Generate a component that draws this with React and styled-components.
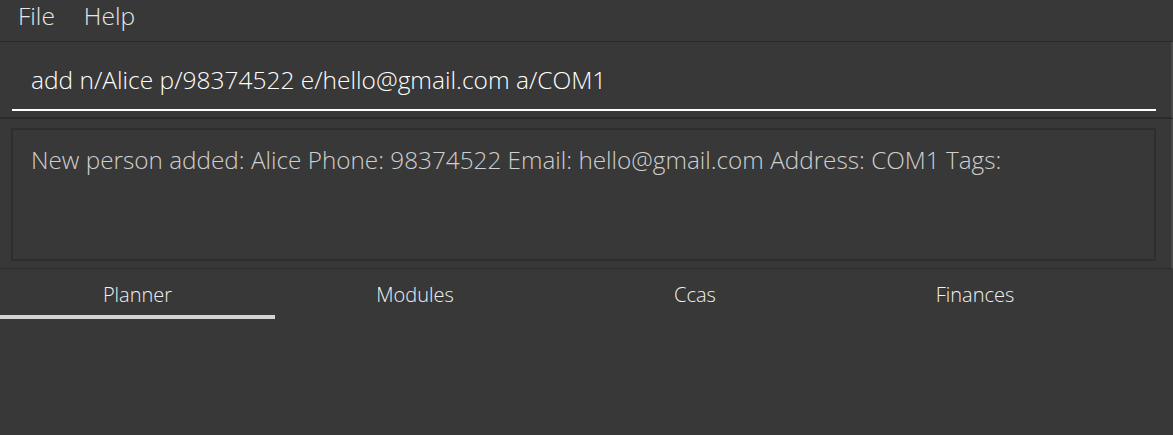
import React from "react";
import styled, { createGlobalStyle } from "styled-components";

const GlobalStyle = createGlobalStyle`
  html, body {
    margin: 0;
    padding: 0;
    background: #383838;
  }
  body {
    font-family: "Open Sans", "Noto Sans", sans-serif;
    font-weight: 300;
  }
`;

const tabs = ["Planner", "Modules", "Ccas", "Finances"];

function App() {
  return (
    <Window>
      <GlobalStyle />
      <MenuBar>
        <MenuItem>File</MenuItem>
        <MenuItem>Help</MenuItem>
      </MenuBar>

      <CommandSection>
        <CommandField>add n/Alice p/98374522 e/hello@gmail.com a/COM1</CommandField>
      </CommandSection>

      <ResultSection>
        <ResultBox>
          New person added: Alice Phone: 98374522 Email: hello@gmail.com
          Address: COM1 Tags:
        </ResultBox>
      </ResultSection>

      <TabBar>
        {tabs.map((t, i) => (
          <Tab key={t} $active={i === 0}>
            {t}
          </Tab>
        ))}
      </TabBar>
    </Window>
  );
}

const Window = styled.div`
  width: 1173px;
  height: 435px;
  background: #383838;
  overflow: hidden;
`;

const MenuBar = styled.div`
  height: 42px;
  display: flex;
  align-items: flex-start;
  gap: 29px;
  padding: 0 0 0 18px;
  border-bottom: 1px solid #2b2b2b;
  box-sizing: border-box;
`;

const MenuItem = styled.span`
  font-size: 24.5px;
  color: #e6e6e6;
  line-height: 32px;
`;

const CommandSection = styled.div`
  height: 77px;
  padding: 12px 15px 0 12px;
  box-sizing: border-box;
  border-right: 2px solid #4a4a4a;
  border-bottom: 2px solid #2b2b2b;
`;

const CommandField = styled.div`
  height: 57px;
  padding: 0 0 4px 19px;
  box-sizing: border-box;
  display: flex;
  align-items: center;
  font-size: 24.5px;
  color: #ffffff;
  border-bottom: 2px solid #ffffff;
`;

const ResultSection = styled.div`
  height: 150px;
  padding: 9px 15px 0 11px;
  box-sizing: border-box;
  border-right: 2px solid #4a4a4a;
  border-bottom: 1px solid #2b2b2b;
`;

const ResultBox = styled.div`
  height: 133px;
  box-sizing: border-box;
  border: 2px solid #2e2e2e;
  padding: 15px 18px;
  font-size: 24.3px;
  color: #cfcfcf;
  line-height: 1.2;
`;

const TabBar = styled.div`
  display: flex;
  height: 50px;
`;

const Tab = styled.div`
  width: 280px;
  box-sizing: border-box;
  padding-top: 12px;
  text-align: center;
  font-size: 20px;
  color: #f0f0f0;
  border-bottom: 4px solid ${(p) => (p.$active ? "#d4d4d4" : "transparent")};
  &:first-child {
    width: 275px;
  }
`;

export default App;
